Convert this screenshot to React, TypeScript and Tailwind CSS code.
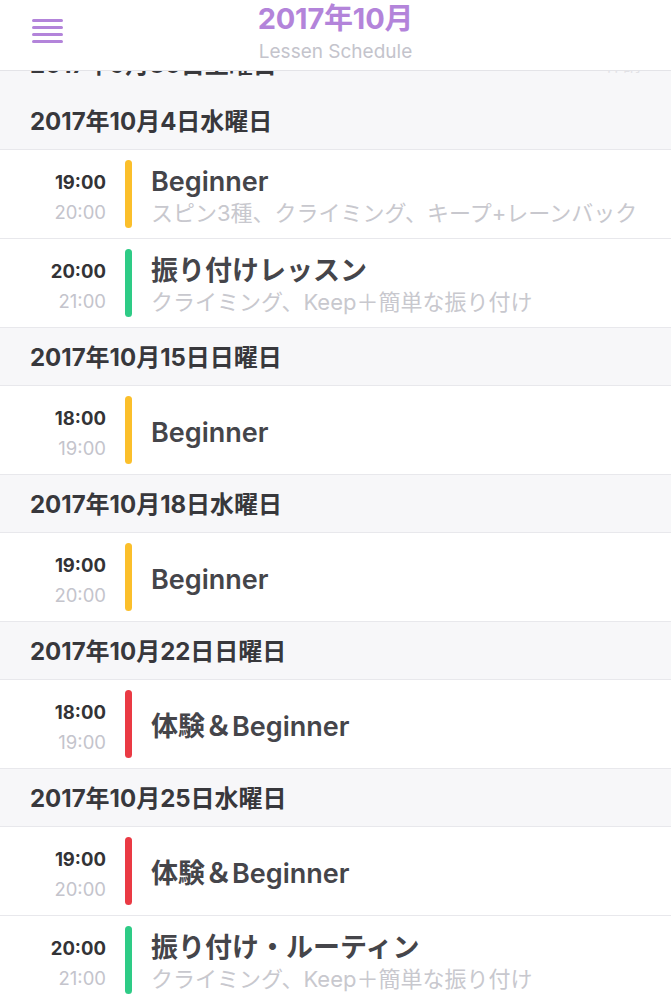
import React from "react";

type Lesson = { start: string; end: string; title: string; sub?: string; color: string };
type Section = { date: string; right?: string; lessons: Lesson[] };

const Y = "bg-[#fbbf2b]";
const G = "bg-[#2ecb86]";
const R = "bg-[#ea3a44]";

const sections: Section[] = [
  { date: "2017年9月30日土曜日", right: "休講", lessons: [] },
  {
    date: "2017年10月4日水曜日",
    lessons: [
      { start: "19:00", end: "20:00", title: "Beginner", sub: "スピン3種、クライミング、キープ+レーンバック", color: Y },
      { start: "20:00", end: "21:00", title: "振り付けレッスン", sub: "クライミング、Keep＋簡単な振り付け", color: G },
    ],
  },
  { date: "2017年10月15日日曜日", lessons: [{ start: "18:00", end: "19:00", title: "Beginner", color: Y }] },
  { date: "2017年10月18日水曜日", lessons: [{ start: "19:00", end: "20:00", title: "Beginner", color: Y }] },
  { date: "2017年10月22日日曜日", lessons: [{ start: "18:00", end: "19:00", title: "体験＆Beginner", color: R }] },
  {
    date: "2017年10月25日水曜日",
    lessons: [
      { start: "19:00", end: "20:00", title: "体験＆Beginner", color: R },
      { start: "20:00", end: "21:00", title: "振り付け・ルーティン", sub: "クライミング、Keep＋簡単な振り付け", color: G },
    ],
  },
];

const font = { fontFamily: '"Inter", "Noto Sans CJK JP", sans-serif' };

export default function App() {
  return (
    <div className="relative w-[671px] h-[1000px] overflow-hidden bg-white" style={font}>
      <header className="absolute top-0 left-0 right-0 z-10 h-[71px] bg-white border-b border-[#e4e4e8]">
        <div className="absolute left-[32px] top-[19px] flex flex-col gap-[4px]">
          <span className="block w-[31px] h-[3px] rounded-full bg-[#b384da]" />
          <span className="block w-[31px] h-[3px] rounded-full bg-[#b384da]" />
          <span className="block w-[31px] h-[3px] rounded-full bg-[#b384da]" />
          <span className="block w-[31px] h-[3px] rounded-full bg-[#b384da]" />
        </div>
        <div className="flex flex-col items-center pt-[1px]">
          <div className="text-[29px] leading-[36px] font-bold text-[#b384da] tracking-[-0.2px]">2017年10月</div>
          <div className="text-[19px] leading-[26px] text-[#c4c4cc] mt-[2px]">Lessen Schedule</div>
        </div>
      </header>
      <div className="pt-[37px]">
        {sections.map((s, i) => (
          <div key={i}>
            <div
              className={`${i === 0 ? "h-[55px]" : "h-[58px] border-b pt-[3px]"} bg-[#f7f7f9] border-[#e8e8ec] flex items-center justify-between px-[30px]`}
            >
              <span className="text-[24px] font-bold text-[#38383c]">{s.date}</span>
              {s.right && <span className="text-[18px] text-[#e2e2e6]">{s.right}</span>}
            </div>
            {s.lessons.map((l, j) => (
              <div key={j} className="h-[89px] border-b border-[#e8e8ec] flex items-center bg-white">
                <div className="w-[106px] pt-[5px] text-right text-[18.5px] leading-[30px]">
                  <div className="font-bold text-[#333336]">{l.start}</div>
                  <div className="text-[#c4c4cc]">{l.end}</div>
                </div>
                <div className={`ml-[19px] w-[7px] h-[68px] rounded-full ${l.color}`} />
                <div className="ml-[19px] pt-[5px] flex flex-col">
                  <div className="text-[27px] leading-[32px] font-semibold text-[#45454a] whitespace-nowrap">{l.title}</div>
                  {l.sub && <div className="text-[22px] leading-[30px] text-[#c8c8ce] whitespace-nowrap">{l.sub}</div>}
                </div>
              </div>
            ))}
          </div>
        ))}
      </div>
    </div>
  );
}
